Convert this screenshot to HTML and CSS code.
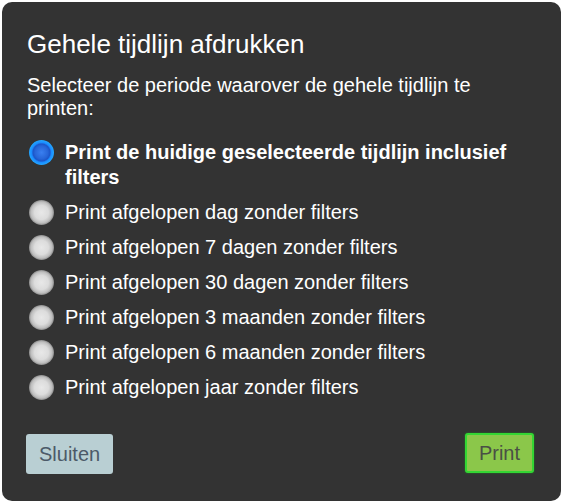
FILE: index.html
```html
<!DOCTYPE html>
<html lang="nl">
<head>
<meta charset="utf-8">
<title>Gehele tijdlijn afdrukken</title>
<link rel="stylesheet" href="styles.css">
</head>
<body>
<div class="dialog">
  <h1 class="title">Gehele tijdlijn afdrukken</h1>
  <p class="intro">Selecteer de periode waarover de gehele tijdlijn te printen:</p>
  <div class="options">
    <label class="option selected"><span class="radio"></span><span class="label">Print de huidige geselecteerde tijdlijn inclusief filters</span></label>
    <label class="option"><span class="radio"></span><span class="label">Print afgelopen dag zonder filters</span></label>
    <label class="option"><span class="radio"></span><span class="label">Print afgelopen 7 dagen zonder filters</span></label>
    <label class="option"><span class="radio"></span><span class="label">Print afgelopen 30 dagen zonder filters</span></label>
    <label class="option"><span class="radio"></span><span class="label">Print afgelopen 3 maanden zonder filters</span></label>
    <label class="option"><span class="radio"></span><span class="label">Print afgelopen 6 maanden zonder filters</span></label>
    <label class="option"><span class="radio"></span><span class="label">Print afgelopen jaar zonder filters</span></label>
  </div>
  <div class="actions">
    <button class="btn btn-close">Sluiten</button>
    <button class="btn btn-print">Print</button>
  </div>
</div>
</body>
</html>
```
FILE: styles.css
```css
html, body {
  margin: 0;
  padding: 0;
  background: #ffffff;
}
body {
  font-family: "Liberation Sans", Arial, sans-serif;
  padding: 2px;
}
.dialog {
  box-sizing: border-box;
  width: 559px;
  height: 499px;
  background: #333333;
  border-radius: 10px;
  padding: 27px 25px 0 25px;
  color: #ffffff;
}
.title {
  margin: 0;
  font-size: 26px;
  line-height: 30px;
  font-weight: normal;
}
.intro {
  margin: 15px 0 0 0;
  font-size: 20px;
  line-height: 23px;
  width: 509px;
}
.options {
  margin-top: 20px;
  display: flex;
  flex-direction: column;
  gap: 10px;
}
.option {
  display: flex;
  align-items: flex-start;
  gap: 11px;
  font-size: 20px;
  line-height: 25px;
  padding-left: 2px;
}
.option.selected .label {
  font-weight: bold;
}
.label {
  width: 471px;
}
.radio {
  flex: none;
  width: 25px;
  height: 25px;
  margin-top: 0;
  border-radius: 50%;
  box-sizing: border-box;
  background: radial-gradient(circle at 50% 50%, #e8e8e8 0, #dcdcdc 40%, #bdbdbd 60%, #5e5e5e 80%, rgba(51,51,51,0) 100%);
}
.option.selected .radio {
  background: radial-gradient(circle at 50% 50%, #3a7ff0 0, #2766d8 36%, #1c55c8 48%, #1a8cff 56%, #22a3ff 68%, #1570c8 82%, rgba(51,51,51,0) 100%);
}
.actions {
  margin-top: 33px;
  display: flex;
  justify-content: space-between;
  align-items: flex-start;
  padding-right: 2px;
}
.btn {
  font-family: "Liberation Sans", Arial, sans-serif;
  font-size: 20px;
  line-height: 22px;
  border-radius: 3px;
  cursor: pointer;
}
.btn-close {
  margin-top: 1px;
  margin-left: -1px;
  height: 40px;
  padding: 0 13px;
  background: #b9cfd3;
  color: #4c5a68;
  border: none;
}
.btn-print {
  height: 40px;
  padding: 0 12px;
  background: #8bc74a;
  color: #4a4f45;
  border: 2px solid #33d633;
  box-shadow: 0 0 2px #1e8a1e;
}
```
